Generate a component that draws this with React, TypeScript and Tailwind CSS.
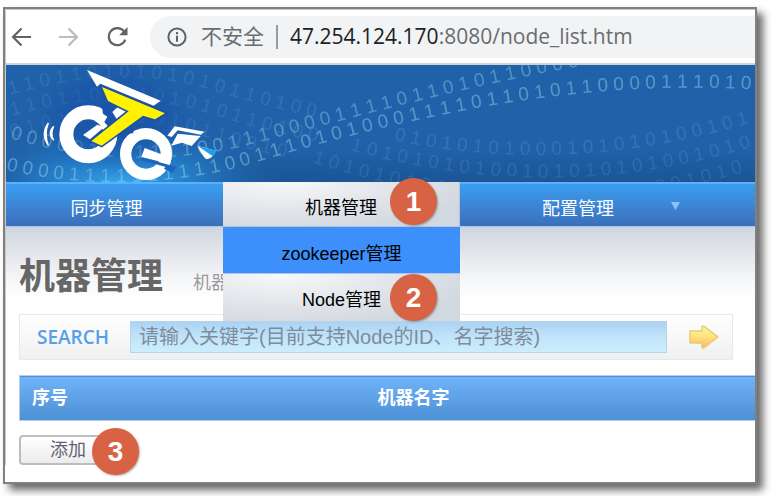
import React from "react";

const sans = "font-['Liberation_Sans','Noto_Sans_CJK_SC',sans-serif]";

function Badge({ n, className }: { n: number; className: string }) {
  return (
    <span
      className={`absolute z-20 flex size-[47px] items-center justify-center rounded-full bg-[#d86344] font-['Liberation_Sans',sans-serif] text-[28px] font-bold text-white shadow-[1px_1px_2px_rgba(0,0,0,0.3)] ${className}`}
    >
      {n}
    </span>
  );
}

function BrowserBar() {
  return (
    <div className="flex h-[55px] items-center border-b-2 border-[#cfd1d5] bg-white py-1">
      <div className="flex w-[144px] items-center gap-7 pl-[5px]">
        <button aria-label="Back">
          <svg width="20" height="20" viewBox="0 0 20 20" fill="none" stroke="#5f6368" strokeWidth="2.2">
            <path d="M20 10H2M10.500 1.500L2 10l8.500 8.500" />
          </svg>
        </button>
        <button aria-label="Forward">
          <svg width="20" height="20" viewBox="0 0 20 20" fill="none" stroke="#b9bbbe" strokeWidth="2.2">
            <path d="M0 10h18M9.500 1.500l8.500 8.500-8.500 8.500" />
          </svg>
        </button>
        <button aria-label="Reload">
          <svg width="21" height="20" viewBox="0 0 21 20" fill="none" stroke="#5f6368" strokeWidth="2.2">
            <path d="M17 4.4A8.5 8.5 0 1 0 18.3 12.6" />
            <path d="M20.5 0v8.300h-8.300z" fill="#5f6368" stroke="none" />
          </svg>
        </button>
      </div>
      <div className="flex h-[42px] min-w-0 flex-1 items-center rounded-l-full bg-[#f1f3f4] pl-[17px] font-['Open_Sans','Noto_Sans_CJK_SC',sans-serif] text-[21px] whitespace-nowrap text-[#6a6d71]">
        <svg width="20" height="20" viewBox="0 0 20 20" fill="none" stroke="#5f6368" strokeWidth="2">
          <circle cx="10" cy="10" r="8.600" />
          <path d="M10 8.800v6M10 5v2.200" />
        </svg>
        <span className="ml-[14px]">不安全</span>
        <span className="mx-3 h-6 w-[2px] bg-[#9a9c9f]" />
        <span>
          <span className="text-[#202124]">47.254.124.170</span>:8080/node_list.htm
        </span>
      </div>
    </div>
  );
}

const streams = [
  { id: "s1", d: "M10 95Q120 62 215 91T420 137", o: 0.11, t: "1 1 0 1 1 0 1 0 1 0 1 0 1 0 1 1 0 1 0 0" },
  { id: "s2", d: "M12 116Q120 84 215 115T440 160", o: 0.1, t: "1 1 0 1 1 0 1 0 1 0 1 0 1 0 1 1 0 1 0 0" },
  { id: "s3", d: "M12 138Q110 106 200 135T440 182", o: 0.09, t: "0 1 0 1 1 0 1 0 1 0 1 0 1 1 0 0 1 0" },
  { id: "s4", d: "M10 138Q120 172 235 148C340 122 480 80 620 60", o: 0.33, t: "0 0 0 0 0 1 1 1 1 1 1 1 0 0 1 1 1 0 0 0 0 1 1 1 1 0 1 1 0 1 0 1 1 0 0 0 0 1 1 1" },
  { id: "s5", d: "M6 170Q120 196 240 167C370 128 560 76 760 90", o: 0.37, t: "0 0 0 0 1 1 1 1 1 1 1 1 1 1 0 0 1 1 1 0 1 0 1 0 0 0 1 1 1 1 0 1 1 0 1 0 1 1 0 0 0 0 1 1 1 0 1 0 1" },
  { id: "s6", d: "M394 140Q570 178 760 120", o: 0.12, t: "0 1 0 1 0 1 0 1 0 0 0 1 0 1 0 1 0 1 0 0 1 0 1" },
  { id: "s7", d: "M350 150Q560 208 760 144", o: 0.11, t: "1 0 1 0 1 0 1 0 1 0 0 1 0 1 0 1 0 1 0 1 0 0 1 0 1 0" },
  { id: "s8", d: "M312 162Q550 240 760 166", o: 0.1, t: "1 0 1 0 1 0 1 0 1 0 1 0 0 1 0 1 0 1 0 1 0 1 0 0 1 0 1 0" },
];

function Banner() {
  return (
    <svg className="block h-[117px] w-full bg-[#2062aa]" role="img" aria-label="eTe">
      <defs>
        <radialGradient id="glow">
          <stop offset="0" stopColor="#35aaf0" />
          <stop offset="0.5" stopColor="#2688d4" stopOpacity="0.65" />
          <stop offset="1" stopColor="#2062aa" stopOpacity="0" />
        </radialGradient>
        <linearGradient id="shade" x2="0" y2="1">
          <stop offset="0.7" stopColor="#184c88" stopOpacity="0" />
          <stop offset="1" stopColor="#184c88" stopOpacity="0.6" />
        </linearGradient>
      </defs>
      <rect width="100%" height="117" fill="url(#shade)" />
      <ellipse cx="115" cy="118" rx="165" ry="60" fill="url(#glow)" />
      <g transform="translate(-6 -65)">
        {streams.map((s) => (
          <React.Fragment key={s.id}>
            <path id={s.id} d={s.d} fill="none" />
            <text className="font-['Liberation_Sans',sans-serif] text-[19px]" fill="#b9ecf5" opacity={s.o}>
              <textPath href={`#${s.id}`}>{s.t}</textPath>
            </text>
          </React.Fragment>
        ))}
        <ellipse cx="113" cy="118" rx="62" ry="44" fill="#164ba6" opacity="0.5" className="blur-md" />
        <g transform="scale(0.33333)">
          <circle cx="265" cy="403" r="66" fill="none" stroke="#fff" strokeWidth="42" />
          <circle cx="438" cy="462" r="61" fill="none" stroke="#fff" strokeWidth="34" />
          <path d="M434 444L514 474L510 492L424 471Z" fill="#fff" />
          <path d="M424 476L520 503" stroke="#1d66bd" strokeWidth="9" />
          <path d="M500 494L530 500L518 518L492 507Z" fill="#1d66bd" />
          <path d="M306 320L400 310L400 400L345 402L312 365Z" fill="#1a53ab" />
          <path d="M292 330L322 350L306 378L284 362Z" fill="#fff" />
          <path d="M337 336L353 321L381 332L350 357Z" fill="#fff" />
          <path d="M249 405L292 374L312 382L270 418Z" fill="#fff" />
          <path
            d="M306 261L495 340L465 358L429 347L305 437L274 423L386 334L324 303Z"
            fill="#fff200"
            stroke="#1a51a8"
            strokeWidth="10"
            paintOrder="stroke"
          />
          <path d="M261 210L482 302L461 317L301 251L291 260Z" fill="#fff" />
          <path d="M145 369Q121 402 145 436Q132 402 145 369Z M161 379Q140 400 161 421Q150 400 161 379Z" fill="#fff" stroke="#fff" strokeWidth="4" />
          <path d="M502 407L524 379L614 395L602 404L533 391L515 411Z" fill="#fff" />
          <path d="M533 401L602 408L575 438L546 428L514 437Z" fill="#fff" />
          <path d="M592 437L648 452Q638 476 619 478Q607 468 592 437Z" fill="#fff" />
          <path d="M592 437L649 452Q645 462 637 468Z" fill="#20a0e8" />
        </g>
      </g>
    </svg>
  );
}

const silver = "bg-[radial-gradient(ellipse_at_25%_0%,#f7f8fa_0%,#e2e5ea_45%,#d2d8e0_80%)]";

function Nav() {
  return (
    <nav className={`relative z-10 flex h-[45px] border-t-2 border-b border-t-[#5cb0fa] border-b-[#a9c6ea] bg-linear-to-b from-[#3a9ef2] to-[#3b6fba] ${sans} text-lg leading-6`}>
      <a href="#sync" className="flex w-[217px] items-center justify-center pt-2 pr-4 text-white">
        同步管理
      </a>
      <div className="relative -mt-[2px] -mb-px w-[237px]">
        <a href="#machine" className={`flex h-[45px] items-center justify-center border-r border-b border-[#b4c4dc] pt-2 text-black ${silver}`}>
          机器管理
        </a>
        <Badge n={1} className="-top-1 left-[167px]" />
        <ul className="absolute inset-x-0 top-full text-black">
          <li>
            <a href="#zookeeper" className="flex h-[47px] items-center justify-center border-b border-[#a8c6f4] bg-[#3d8ffb] pt-2">
              zookeeper管理
            </a>
          </li>
          <li className="relative">
            <a href="#node" className={`flex h-[47px] items-center justify-center pt-1 ${silver}`}>
              Node管理
            </a>
            <Badge n={2} className="top-0 left-[167px]" />
          </li>
        </ul>
      </div>
      <a href="#config" className="relative flex w-[236px] items-center justify-center pt-2 text-white">
        配置管理
        <svg className="absolute top-[18px] right-4" width="9" height="8" viewBox="0 0 9 8">
          <path d="M0 0h9L4.500 8z" fill="#86c4f8" />
        </svg>
      </a>
    </nav>
  );
}

function SearchBar() {
  return (
    <form className="mr-[22px] flex h-[46px] items-center border border-[#e1eaef] bg-linear-to-b from-white to-[#f0f0f0] pl-[17px]">
      <label htmlFor="keyword" className="w-[93px] font-['Open_Sans',sans-serif] text-[19px] font-semibold text-[#569fe8]">
        SEARCH
      </label>
      <input
        id="keyword"
        type="text"
        placeholder="请输入关键字(目前支持Node的ID、名字搜索)"
        className={`h-8 min-w-0 flex-1 border border-[#b5d5e6] bg-linear-to-b from-[#acd2f4] via-[#c0e4fa] to-[#cbedfc] px-2 ${sans} text-xl text-[#708090] placeholder:text-[#7f8d9b] placeholder:opacity-100`}
      />
      <button type="button" aria-label="Search" className="flex w-[65px] justify-center pl-2">
        <svg width="30" height="24" viewBox="0 0 30 24">
          <defs>
            <linearGradient id="gold" x2="0" y2="1">
              <stop offset="0" stopColor="#fdf9a2" />
              <stop offset="0.5" stopColor="#ffe17a" />
              <stop offset="1" stopColor="#fdb76d" />
            </linearGradient>
          </defs>
          <path d="M1 6h12V1.500Q14 .5 15.500 1.500L29 12L15.500 22.500Q14 23.500 13 22.500V18H1z" fill="url(#gold)" stroke="#e8cc6c" strokeWidth="1.500" strokeLinejoin="round" />
        </svg>
      </button>
    </form>
  );
}

export default function App() {
  return (
    <div className="flex min-h-screen flex-col bg-white pt-[7px] pr-[15px] pb-3 pl-[3px]">
      <div className="flex-1 border-2 border-[#808080] bg-white shadow-[6px_6px_8px_rgba(0,0,0,0.6)]">
        <div className="border-t border-l border-[#c8c8c8]">
          <BrowserBar />
          <Banner />
          <Nav />
          <main className="bg-[linear-gradient(#cfd5df,#e2e5ea_25px,#f4f5f7_50px,#fff_72px)] pt-[25px] pl-[13px]">
            <div className={`flex items-baseline ${sans}`}>
              <h1 className="text-4xl leading-[50px] font-bold text-[#666]">机器管理</h1>
              <p className="ml-[30px] text-lg text-[#999]">机器</p>
            </div>
            <div className="mt-3">
              <SearchBar />
            </div>
            <table className={`mt-[15px] w-full ${sans} text-lg text-white`}>
              <thead>
                <tr className="h-[45px] border border-r-0 border-[#b7cde3] bg-linear-to-b from-[#71b3f9] to-[#4c90d6] text-left">
                  <th scope="col" className="w-[346px] px-3 font-bold">序号</th>
                  <th scope="col" className="px-3 font-bold">机器名字</th>
                </tr>
              </thead>
            </table>
            <div className="relative mt-[14px] mb-4 flex">
              <button
                type="button"
                className={`h-[30px] w-[98px] rounded-[4px] border-2 border-[#bdbdbd] bg-linear-to-b from-white to-[#ececec] ${sans} text-lg leading-6 text-[#5a6472]`}
              >
                添加
              </button>
              <Badge n={3} className="-top-[7px] left-[73px]" />
            </div>
          </main>
        </div>
      </div>
    </div>
  );
}
